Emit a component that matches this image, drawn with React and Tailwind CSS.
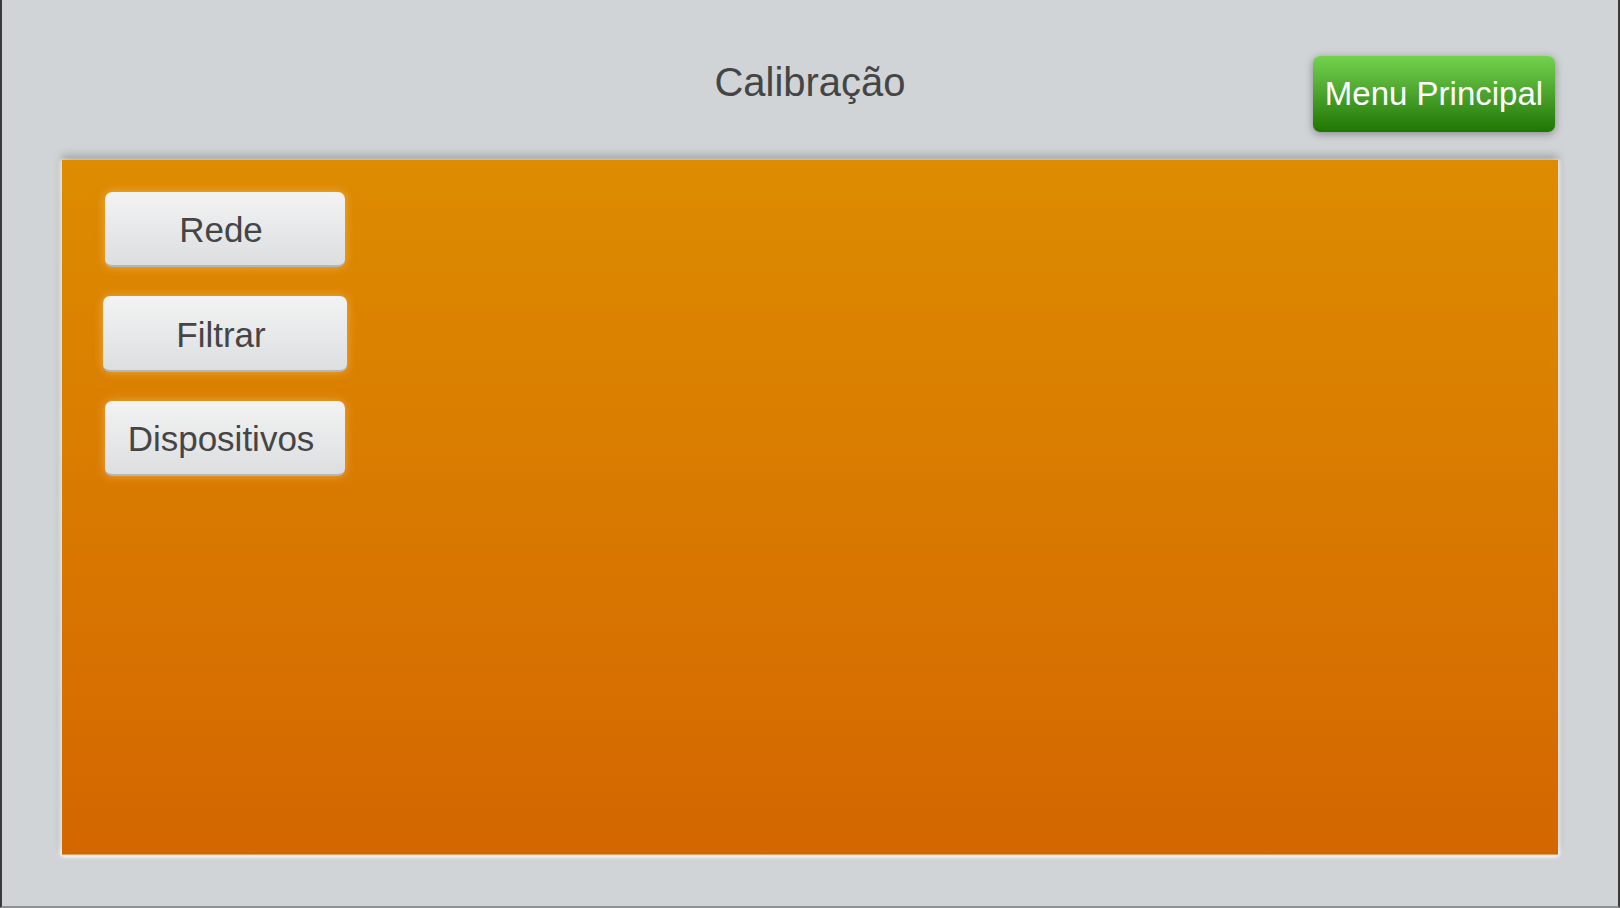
export default function App() {
  const font = { fontFamily: '"Liberation Sans", Arial, sans-serif' };
  const btn =
    "flex items-center justify-center pr-[8px] pt-[4px] rounded-[7px] bg-gradient-to-b from-[#f3f3f3] to-[#dcdee0] border-b-2 border-[#b3b7bb] text-[35px] text-[#454545] shadow-[0_0_10px_rgba(255,200,120,0.55)]";
  return (
    <div
      className="w-[1620px] h-[908px] bg-[#d0d4d7] border-l-2 border-r-2 border-l-[#3a3a3a] border-r-[#3a3a3a] border-b-2 border-b-[#8e9295] flex flex-col overflow-hidden"
      style={font}
    >
      <div className="h-[158px] grid grid-cols-[1fr_auto_1fr] items-start">
        <div />
        <div className="pt-[62px] text-[40px] text-[#454545] leading-none">Calibração</div>
        <div className="flex justify-end pr-[63px] pt-[56px]">
          <div className="w-[242px] h-[76px] rounded-[7px] bg-gradient-to-b from-[#74d24e] to-[#1f7800] border-b border-[#2a6a10] flex items-center justify-center text-white text-[33px] shadow-[0_2px_8px_rgba(0,0,0,0.35)]">
            Menu Principal
          </div>
        </div>
      </div>
      <div className="mx-[60px] h-[695px] mt-[2px] bg-gradient-to-b from-[#dd8c00] to-[#d46600] border-b border-[#ee9a55] shadow-[0_-5px_8px_rgba(0,0,0,0.22),0_2px_4px_rgba(255,255,255,0.95),-2px_0_3px_rgba(255,255,255,0.8),2px_0_3px_rgba(255,255,255,0.8)] pt-[32px] pl-[41px] flex flex-col gap-[29px] items-start">
        <div className={`${btn} w-[240px] h-[75px] ml-[2px]`}>Rede</div>
        <div className={`${btn} w-[244px] h-[76px]`}>Filtrar</div>
        <div className={`${btn} w-[240px] h-[75px] ml-[2px]`}>Dispositivos</div>
      </div>
    </div>
  );
}
